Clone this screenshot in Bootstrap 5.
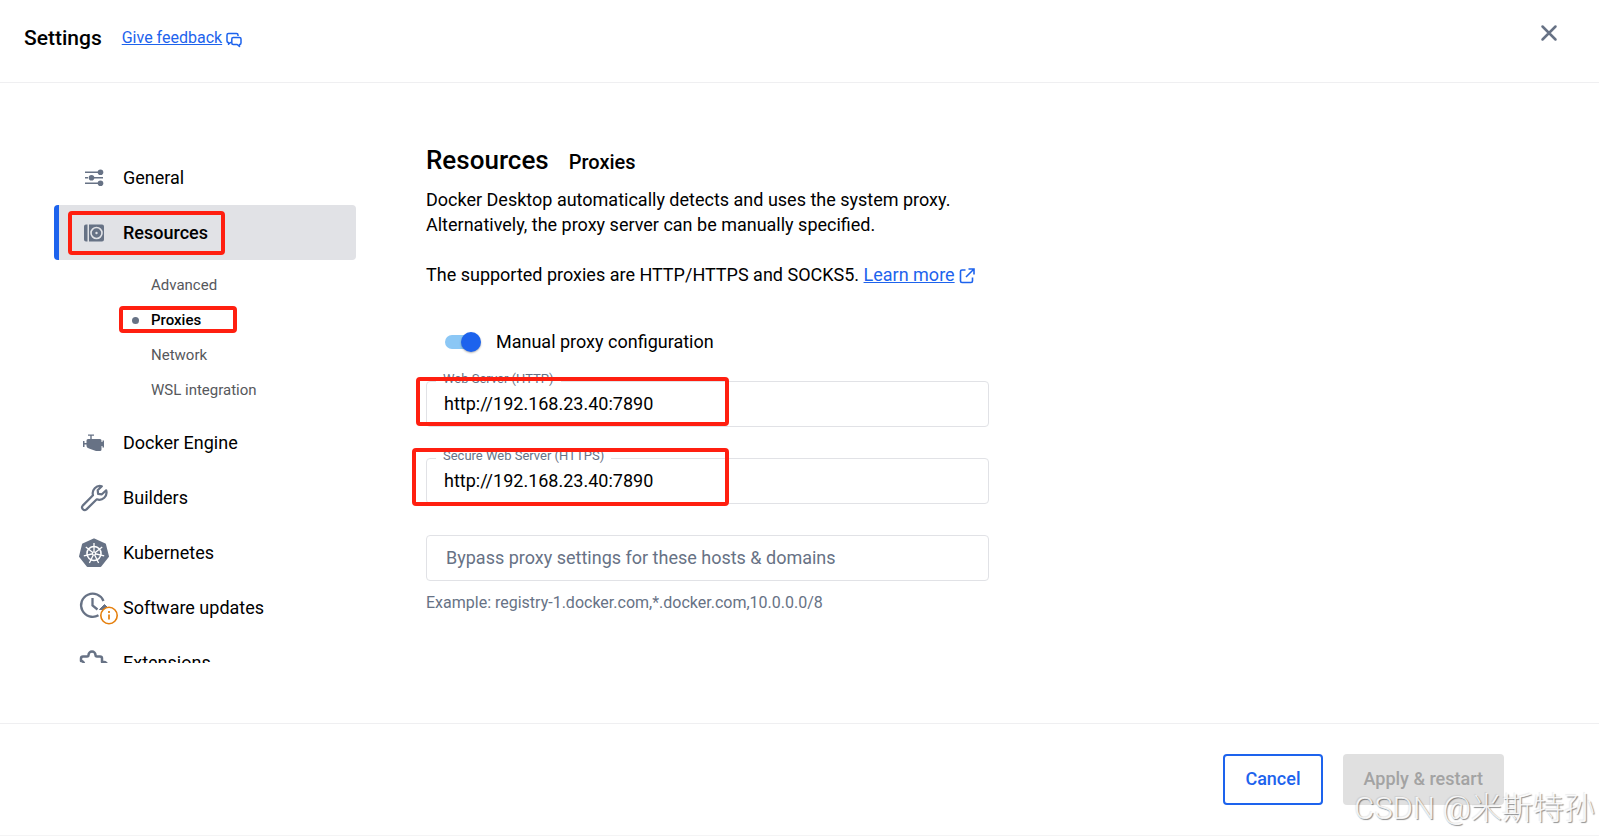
<!DOCTYPE html>
<html lang="en">
<head>
<meta charset="utf-8">
<meta name="viewport" content="width=device-width, initial-scale=1">
<title>Settings</title>
<link href="https://cdn.jsdelivr.net/npm/bootstrap@5.3.0/dist/css/bootstrap.min.css" rel="stylesheet">
<style>
  :root { --ink: #000; --slate: #677285; --blue: #1d63ed; --line: #e1e2e6; --alert: #ff1f10; }
  body { font-family: Roboto, "Liberation Sans", sans-serif; font-size: 18px; line-height: 25px; color: var(--ink); background: #fff; }
  a { color: var(--blue); }
  .topbar { height: 83px; padding: 0 24px 6px; border-bottom: 1px solid #efeff1; }
  .topbar h1 { font-size: 21px; line-height: 24px; font-weight: 500; margin: 0 20px 0 0; }
  .feedback { font-size: 16px; line-height: 24px; }
  .close-btn { width: 36px; height: 36px; margin: 0 8px 10px 0; color: var(--slate); }
  .body-area { min-height: 0; padding: 67px 54px 60px; gap: 70px; }
  .side { width: 302px; overflow: hidden; }
  .side-item { height: 55px; padding-left: 24px; gap: 13px; color: var(--ink); border-radius: 4px; text-decoration: none; position: relative; flex-shrink: 0; }
  .side-item svg { width: 32px; height: 32px; color: var(--slate); overflow: visible; }
  .side-item.current { background: var(--line); font-weight: 500; border-left: 5px solid var(--blue); padding-left: 19px; }
  .sub-list { padding: 8px 0 7px 97px; }
  .sub-item { height: 35px; font-size: 15px; color: #56585c; text-decoration: none; position: relative; }
  .sub-item.current { color: var(--ink); font-weight: 500; }
  .dot { position: absolute; left: -19px; width: 7px; height: 7px; border-radius: 50%; background: var(--slate); }
  .marker { position: absolute; border: 4px solid var(--alert); border-radius: 4px; pointer-events: none; }
  .marker-res { left: 9px; top: 6px; width: 157px; height: 44px; }
  .marker-sub { left: -32px; top: 3px; width: 118px; height: 27px; }
  .marker-http { left: -10px; top: -4px; width: 313px; height: 49px; }
  .marker-https { left: -14px; top: -10px; width: 317px; height: 58px; }
  .panel { max-width: 563px; }
  .panel h2 { font-size: 26px; font-weight: 500; line-height: 32px; margin: -6px 0 9px; }
  .panel h3 { font-size: 20px; font-weight: 500; line-height: 32px; margin: -6px 0 9px; }
  .panel p { margin-bottom: 25px; }
  .toggle { padding: 0 0 0 19px; gap: 16px; margin: 42px 0 27px; min-height: 0; }
  .toggle .form-check-input { appearance: none; width: 35px; height: 14px; margin: 0; border: 0; border-radius: 7px; background: #8bc7f5; position: relative; }
  .toggle .form-check-input::after { content: ""; position: absolute; right: -1px; top: -3px; width: 20px; height: 20px; border-radius: 50%; background: var(--blue); box-shadow: 0 1px 2px rgba(0,0,0,.3); }
  .field { position: relative; margin-bottom: 31px; }
  .field .form-control { height: 46px; padding: 9px 17px 11px; font-size: 18px; line-height: 24px; color: var(--ink); border: 1px solid var(--line); border-radius: 4px; }
  .field .form-control::placeholder { color: var(--slate); opacity: 1; }
  .field .wide-pad { padding-left: 19px; }
  .field label { position: absolute; left: 10px; top: -11px; padding: 0 7px; font-size: 13px; line-height: 18px; color: var(--slate); background: #fff; }
  .hint { font-size: 16px; line-height: 20px; color: var(--slate); }
  .foot { height: 113px; padding: 0 95px 0 24px; gap: 20px; border-top: 1px solid #efeff1; border-bottom: 1px solid #f4f4f5; position: relative; }
  .foot .btn { height: 51px; padding: 0 20px 2px; font-size: 18px; font-weight: 500; border-radius: 4px; }
  .btn-line { color: var(--blue); border: 2px solid var(--blue); background: #fff; }
  .foot .btn-mute { color: #a3a3a3; background: #e0e0e0; border: 0; padding: 0 21px 2px; opacity: 1; }
  .stamp { position: absolute; right: 4px; bottom: 8px; font-family: Roboto, "Noto Sans CJK SC", sans-serif; font-weight: 300; font-size: 31px; line-height: 36px; color: rgba(255,255,255,.85); text-shadow: 1px 1px 1px rgba(0,0,0,.45), -1px -1px 1px rgba(0,0,0,.08); white-space: nowrap; }
</style>
</head>
<body class="d-flex flex-column vh-100 overflow-hidden">
<header class="topbar d-flex align-items-center flex-shrink-0">
  <h1>Settings</h1>
  <a class="feedback" href="#">Give feedback</a>
  <svg class="ms-1 mt-1" width="16" height="16" viewBox="0 0 16 16" fill="none" stroke="#1d63ed" stroke-width="1.5" stroke-linejoin="round" aria-hidden="true"><path d="M5.5 10.5H4.500L2.500 12.300V10.500Q1 10.500 1 9V3Q1 1.500 2.500 1.500H10.500Q12 1.500 12 3V4"/><path d="M7.200 5.500H13.500Q15 5.500 15 7V11Q15 12.500 13.500 12.500V14.500L11.200 12.500H7.200Q5.800 12.500 5.800 11V7Q5.800 5.500 7.200 5.500Z"/></svg>
  <button type="button" class="close-btn btn p-0 ms-auto border-0 d-flex align-items-center justify-content-center" aria-label="Close">
    <svg width="18" height="18" viewBox="0 0 18 18" stroke="currentColor" stroke-width="2.500" stroke-linecap="round" aria-hidden="true"><path d="M2.500 2.500 15.500 15.500M15.500 2.500 2.500 15.500"/></svg>
  </button>
</header>

<main class="body-area d-flex flex-grow-1">
  <nav class="side d-flex flex-column flex-shrink-0" aria-label="Settings sections">
    <a class="side-item d-flex align-items-center" href="#">
      <svg viewBox="0 0 32 32" fill="currentColor" aria-hidden="true"><path d="M7 9.500h13v1.500H7zM7 15h3v1.500H7zM16 15h9v1.500h-9zM7 20.500h13v1.500H7z"/><circle cx="22.500" cy="10.200" r="2.800"/><circle cx="13.500" cy="15.700" r="2.800"/><circle cx="22.500" cy="21.200" r="2.800"/></svg>
      <span>General</span>
    </a>
    <a class="side-item current d-flex align-items-center" href="#" aria-current="true">
      <svg viewBox="0 0 32 32" aria-hidden="true"><path d="M8 7.500h1.500v17H8a2 2 0 0 1-2-2v-13a2 2 0 0 1 2-2zM11 7.500h13a2 2 0 0 1 2 2v13a2 2 0 0 1-2 2H11z" fill="currentColor"/><circle cx="18.500" cy="16" r="5.500" fill="none" stroke="#e1e2e6" stroke-width="1.600"/><circle cx="18.500" cy="16" r="1.200" fill="#e1e2e6"/></svg>
      <span>Resources</span>
      <span class="marker marker-res"></span>
    </a>
    <div class="sub-list d-flex flex-column">
      <a class="sub-item d-flex align-items-center" href="#">Advanced</a>
      <a class="sub-item current d-flex align-items-center" href="#" aria-current="page"><span class="dot"></span>Proxies<span class="marker marker-sub"></span></a>
      <a class="sub-item d-flex align-items-center" href="#">Network</a>
      <a class="sub-item d-flex align-items-center" href="#">WSL integration</a>
    </div>
    <a class="side-item d-flex align-items-center" href="#">
      <svg viewBox="0 0 32 32" fill="currentColor" aria-hidden="true"><path d="M10 7.500h6v1.300h-2.300V12H22q1.500 0 1.500 1.500V15h1v-1.500H26v7h-1.500V19h-1v3.500q0 1.500-1.500 1.500h-4L11 21.500q-2.500-.8-2.500-2.500v-1.500h-2V20H5v-6h1.500v2h2v-2.500Q8.500 12 10 12h2.300V8.800H10z"/></svg>
      <span>Docker Engine</span>
    </a>
    <a class="side-item d-flex align-items-center" href="#">
      <svg viewBox="0 0 32 32" fill="none" stroke="currentColor" stroke-width="2.200" stroke-linejoin="round" aria-hidden="true"><path d="M23.800 4.200A7.300 7.300 0 0 0 15 13.300L4.700 23.600A2.700 2.700 0 0 0 8.500 27.400L18.800 17.300A7.300 7.300 0 0 0 28.200 8.300L23.900 12.300 20.100 11.800 19.700 8.200Z"/></svg>
      <span>Builders</span>
    </a>
    <a class="side-item d-flex align-items-center" href="#">
      <svg viewBox="0 0 32 32" aria-hidden="true"><path d="M16 2.500 27 7.500 30 19.500 22.500 29H9.500L2 19.500 5 7.500Z" fill="currentColor" stroke="currentColor" stroke-width="2" stroke-linejoin="round"/><g stroke="#fff" stroke-width="1.300" fill="none"><circle cx="16" cy="16.500" r="7" stroke-width="1.600"/><path d="M16 16.500V6M16 16.500 24.200 10M16 16.500 26.200 18.800M16 16.500 20.600 26M16 16.500 11.400 26M16 16.500 5.800 18.800M16 16.500 7.800 10"/></g><circle cx="16" cy="16.500" r="2" fill="#fff"/><circle cx="16" cy="16.500" r=".9" fill="currentColor"/></svg>
      <span>Kubernetes</span>
    </a>
    <a class="side-item d-flex align-items-center" href="#">
      <svg viewBox="0 0 32 32" fill="none" aria-hidden="true"><g stroke="currentColor" stroke-width="2.300"><path d="M25.500 9A11.600 11.600 0 1 0 20.500 23.300"/><path d="M14.500 6V13.500L19.500 17.500"/></g><path d="M21.500 17.500 26.500 12.500 31.500 17.500Z" fill="currentColor" stroke="currentColor" stroke-linejoin="round"/><circle cx="31" cy="23.500" r="8.200" fill="#fff" stroke="#e57f0c" stroke-width="1.600"/><path d="M31 22.500V27.500M31 19V21" stroke="#e57f0c" stroke-width="1.700"/></svg>
      <span>Software updates</span>
    </a>
    <a class="side-item d-flex align-items-center" href="#">
      <svg viewBox="0 0 32 32" fill="none" stroke="currentColor" stroke-width="2.500" stroke-linejoin="round" aria-hidden="true"><path d="M5 9.500H9Q10.500 9.500 10.500 8A3.500 3.500 0 0 1 17.500 8Q17.500 9.500 19 9.500H22Q24 9.500 24 11.500V15H26A3 3 0 0 1 26 21H24V27H5Q3 27 3 25V20A3 3 0 0 0 3 14V11.500Q3 9.500 5 9.500Z"/></svg>
      <span>Extensions</span>
    </a>
  </nav>

  <section class="panel flex-grow-1">
    <div class="d-flex align-items-baseline gap-3">
      <h2>Resources</h2>
      <h3 class="ms-1">Proxies</h3>
    </div>
    <p>Docker Desktop automatically detects and uses the system proxy. Alternatively, the proxy server can be manually specified.</p>
    <p>The supported proxies are HTTP/HTTPS and SOCKS5. <a href="#">Learn more</a>
      <svg width="16" height="16" viewBox="0 0 16 16" fill="none" stroke="#1d63ed" stroke-width="1.600" aria-hidden="true"><path d="M6.500 2H3Q1.500 2 1.500 3.500V13Q1.500 14.500 3 14.500H12Q13.500 14.500 13.500 13V9.500M9.500 1H15V6.500M15 1 7 9"/></svg></p>
    <div class="toggle form-check form-switch d-flex align-items-center">
      <input class="form-check-input float-none" type="checkbox" role="switch" id="manual" checked>
      <label for="manual">Manual proxy configuration</label>
    </div>
    <div class="field">
      <input class="form-control" id="http" type="text" value="http://192.168.23.40:7890">
      <label for="http">Web Server (HTTP)</label>
      <span class="marker marker-http"></span>
    </div>
    <div class="field">
      <input class="form-control" id="https" type="text" value="http://192.168.23.40:7890">
      <label for="https">Secure Web Server (HTTPS)</label>
      <span class="marker marker-https"></span>
    </div>
    <div class="field mb-0">
      <input class="form-control wide-pad" type="text" aria-label="Bypass proxy settings" aria-describedby="hint" placeholder="Bypass proxy settings for these hosts &amp; domains">
    </div>
    <div class="hint mt-2 pt-1" id="hint">Example: registry-1.docker.com,*.docker.com,10.0.0.0/8</div>
  </section>
</main>

<footer class="foot d-flex align-items-center justify-content-end flex-shrink-0">
  <button type="button" class="btn btn-line">Cancel</button>
  <button type="button" class="btn btn-mute" disabled>Apply &amp; restart</button>
  <span class="stamp">CSDN @米斯特孙</span>
</footer>
<script src="https://cdn.jsdelivr.net/npm/bootstrap@5.3.0/dist/js/bootstrap.bundle.min.js"></script>
</body>
</html>
